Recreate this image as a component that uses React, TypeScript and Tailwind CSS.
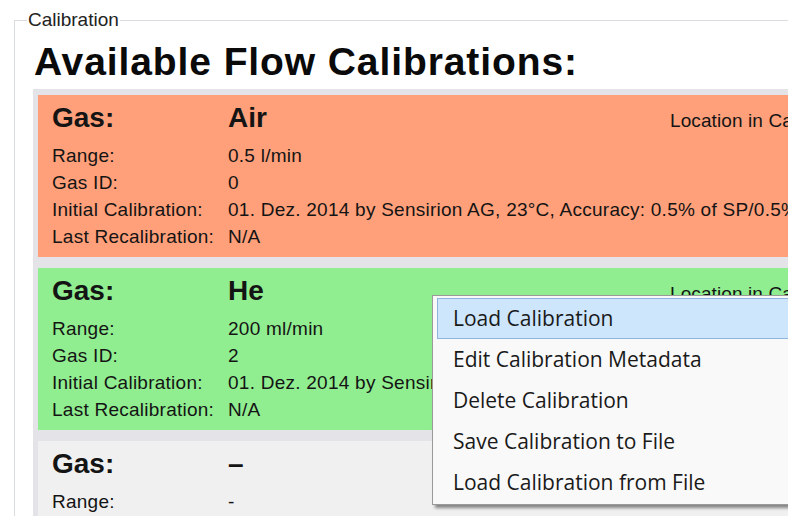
import React from 'react'

interface Calibration {
  gas: string
  range: string
  gasId: string
  initial: string
  last: string
  location: string
  color: string
}

const calibrations: Calibration[] = [
  {
    gas: 'Air',
    range: '0.5 l/min',
    gasId: '0',
    initial: '01. Dez. 2014 by Sensirion AG, 23°C, Accuracy: 0.5% of SP/0.5% of FS',
    last: 'N/A',
    location: 'Location in Calibration Memory: 0',
    color: 'bg-[#ffa07a]',
  },
  {
    gas: 'He',
    range: '200 ml/min',
    gasId: '2',
    initial: '01. Dez. 2014 by Sensirion AG, 23°C, Accuracy: 0.5% of SP/0.5% of FS',
    last: 'N/A',
    location: 'Location in Calibration Memory: 2',
    color: 'bg-[#90ee90]',
  },
  {
    gas: '–',
    range: '-',
    gasId: '-',
    initial: '-',
    last: '-',
    location: 'Location in Calibration Memory: -',
    color: 'bg-[#f0f0f0]',
  },
]

const menuItems = [
  'Load Calibration',
  'Edit Calibration Metadata',
  'Delete Calibration',
  'Save Calibration to File',
  'Load Calibration from File',
]

function CalibrationCard({ cal }: { cal: Calibration }) {
  const rows: [string, string][] = [
    ['Range:', cal.range],
    ['Gas ID:', cal.gasId],
    ['Initial Calibration:', cal.initial],
    ['Last Recalibration:', cal.last],
  ]

  return (
    <div className={`w-[800px] h-[162px] shrink-0 overflow-hidden pl-[14px] pt-[7px] text-[#141414] ${cal.color}`}>
      <div className="flex items-baseline h-[32px] leading-[32px] whitespace-nowrap">
        <div className="w-[176px] shrink-0 text-[28px] font-bold">Gas:</div>
        <div className="w-[442px] shrink-0 text-[28px] font-bold">{cal.gas}</div>
        <div className="shrink-0 text-[19px] tracking-[0.1px]">{cal.location}</div>
      </div>
      <div className="mt-[8px] grid grid-cols-[176px_1fr] text-[19px] leading-[27px] tracking-[0.25px] whitespace-nowrap">
        {rows.map(([label, value]) => (
          <React.Fragment key={label}>
            <div>{label}</div>
            <div>{value}</div>
          </React.Fragment>
        ))}
      </div>
    </div>
  )
}

export default function App() {
  return (
    <div className="w-[808px] h-[528px] bg-white font-['Liberation_Sans',Arial,sans-serif]">
      <div className="relative w-[788px] h-[516px] overflow-hidden">
        <div className="pl-[14px] pt-[9px]">
          <fieldset className="w-[820px] h-[560px] border border-[#d9dde0]">
            <legend className="ml-[12px] px-[1px] text-[19px] leading-[22px] text-[#222]">
              Calibration
            </legend>
            <div className="pl-[18px] pt-[11px]">
              <h1 className="pl-[1px] text-[39px] leading-[39px] font-bold tracking-[0.9px] text-[#0a0a0a] whitespace-nowrap">
                Available Flow Calibrations:
              </h1>
              <div className="mt-[8px] flex flex-col gap-[11px] bg-[#e4e4e8] pt-[6px] pl-[5px]">
                {calibrations.map((cal, i) => (
                  <CalibrationCard key={i} cal={cal} />
                ))}
              </div>
            </div>
          </fieldset>
        </div>

        {/* Context menu */}
        <div className="absolute left-[432px] top-[295px] w-[380px] border border-[#9a9a9a] bg-[#f9f9f9] pt-[2px] pb-[1px] pl-[4px] shadow-[3px_3px_3px_rgba(0,0,0,0.45)] font-['Open_Sans','Noto_Sans',sans-serif] text-[21px] text-[#1a1a1a]">
          {menuItems.map((item, i) => (
            <div
              key={item}
              className={`flex items-center h-[41px] pl-[15px] border whitespace-nowrap ${
                i === 0 ? 'bg-[#cde6fb] border-[#8fb5de]' : 'border-transparent'
              }`}
            >
              {item}
            </div>
          ))}
        </div>
      </div>
    </div>
  )
}
